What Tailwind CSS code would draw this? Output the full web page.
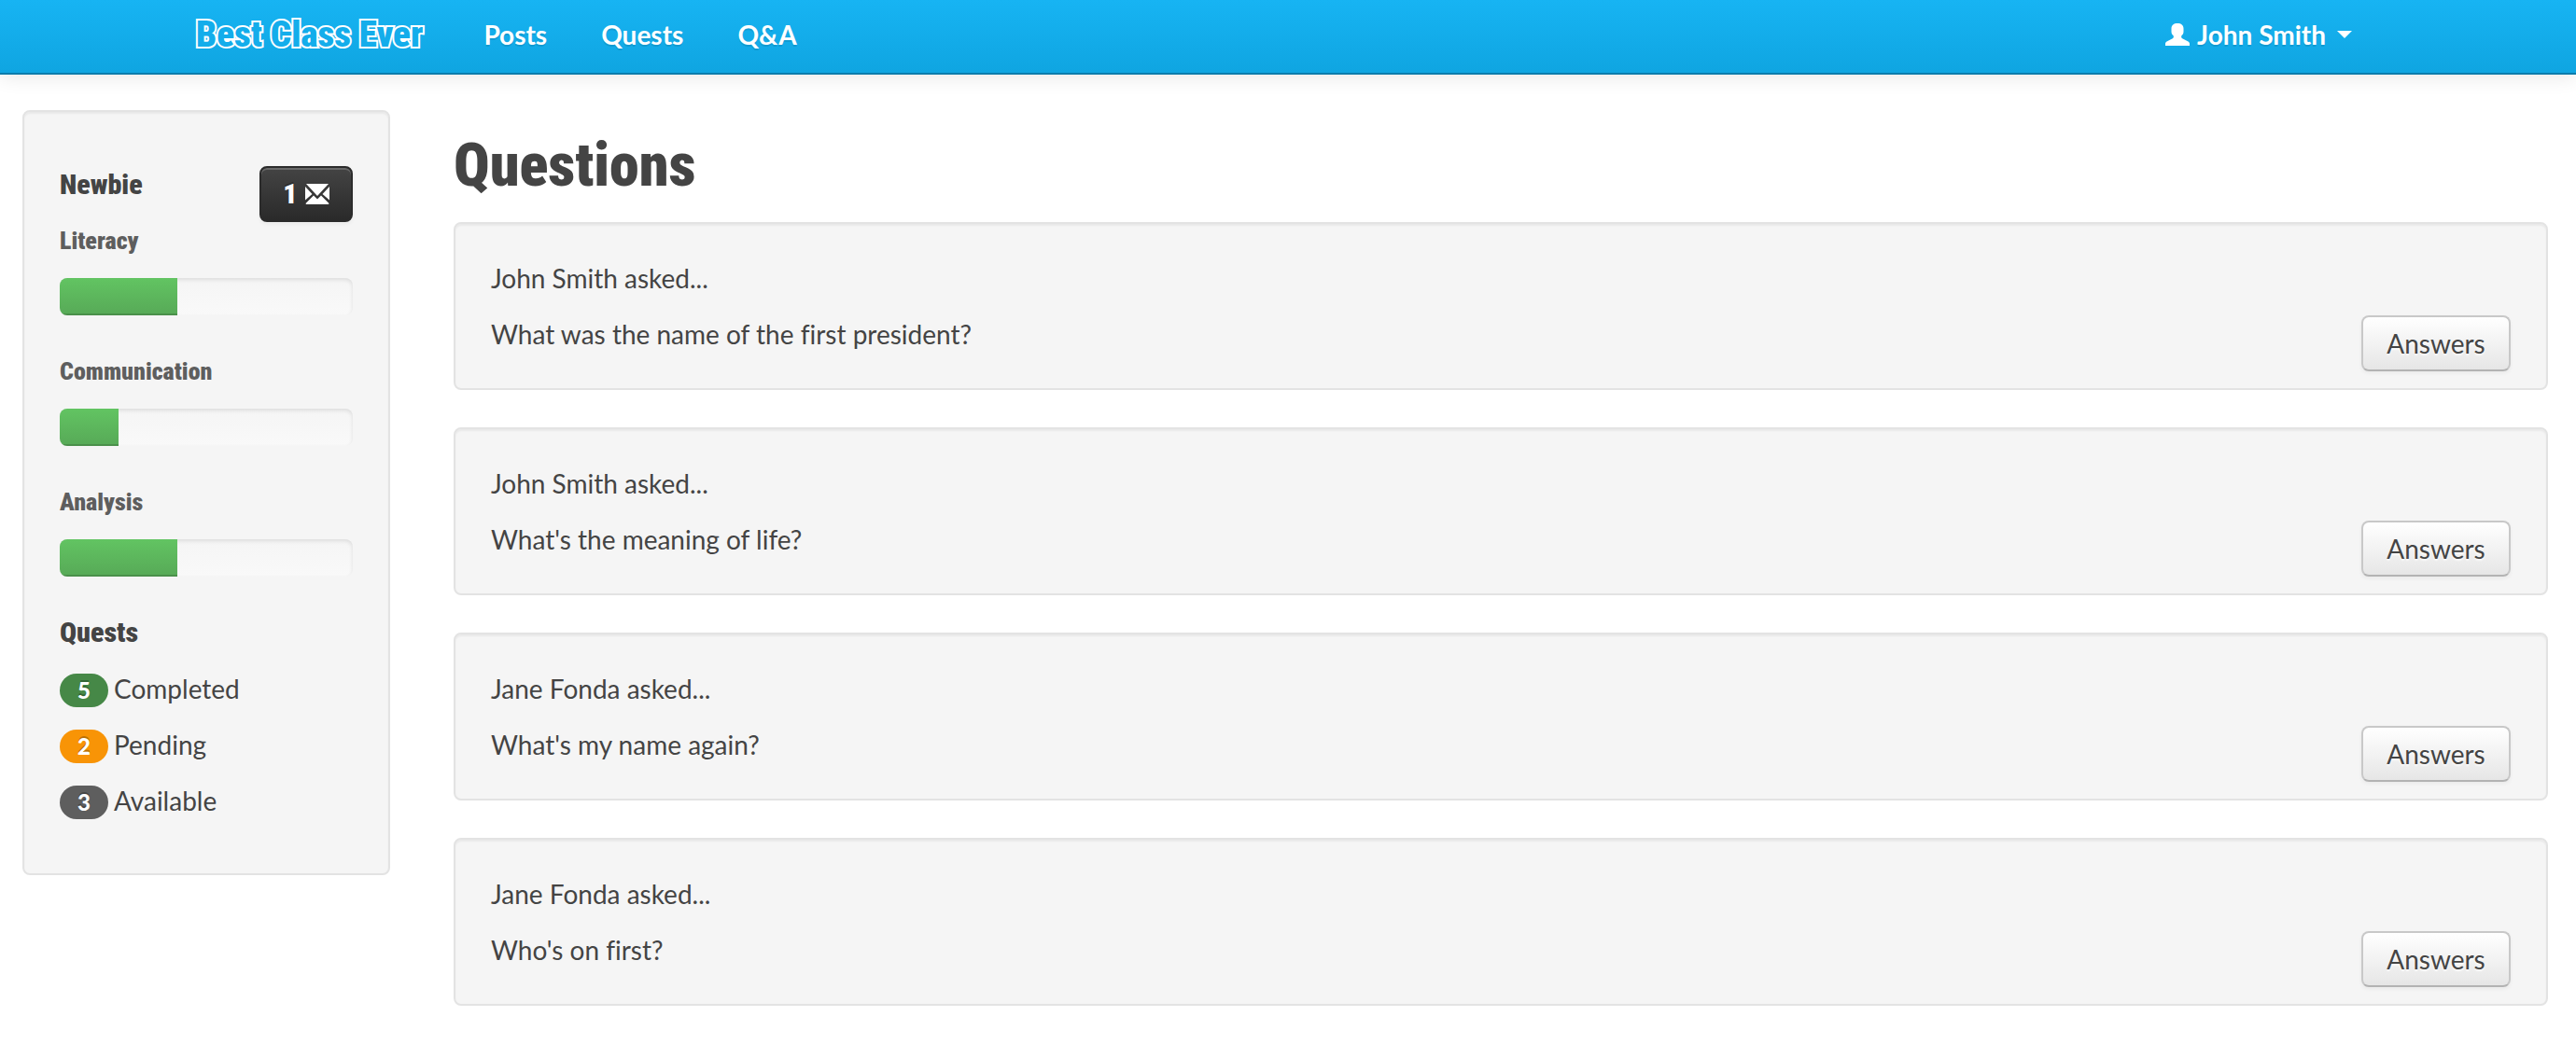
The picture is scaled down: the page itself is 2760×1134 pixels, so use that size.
<!DOCTYPE html>
<html lang="en">
<head>
  <meta charset="UTF-8" />
  <meta name="viewport" content="width=device-width, initial-scale=1" />
  <title>Questions - Best Class Ever</title>
  <script src="https://cdn.jsdelivr.net/npm/@tailwindcss/browser@4"></script>
  <style>
    body {
      font-family: Lato, sans-serif;
      font-variant-ligatures: none;
    }
    .display {
      font-family: 'Liberation Sans Narrow', 'Arial Narrow', 'Roboto Condensed', 'Liberation Sans', sans-serif;
      font-weight: 900;
    }
    /* outlined logo: the stroke goes under the fill so that only the outer edge shows */
    .brand {
      color: #13adeb;
      -webkit-text-stroke: 4px #fff;
      paint-order: stroke fill;
    }
  </style>
</head>
<body class="bg-white text-[28px] leading-10 text-[#444]">
  <!-- Navbar -->
  <nav class="h-20 border-b-2 border-[#0c7cab] bg-linear-to-b from-[#17b4f3] to-[#0fa5e1] shadow-[0_2px_20px_rgba(0,0,0,0.1)]">
    <div class="mx-auto flex h-full max-w-[2340px] items-center justify-between pb-1 text-white">
      <div class="flex items-center">
        <a href="#" class="display brand mr-9 text-[39px]">Best Class Ever</a>
        <a href="#" class="px-[29px] font-bold text-shadow-[0_2px_0_rgba(0,0,0,0.1)]">Posts</a>
        <a href="#" class="px-[29px] font-bold text-shadow-[0_2px_0_rgba(0,0,0,0.1)]">Quests</a>
        <a href="#" class="px-[29px] font-bold text-shadow-[0_2px_0_rgba(0,0,0,0.1)]">Q&amp;A</a>
      </div>
      <button type="button" class="flex items-center px-[30px] font-bold">
        <svg class="mr-2 h-6 w-[26px]" viewBox="0 0 26 24" fill="currentColor" aria-hidden="true">
          <path d="M13 0C9 0 6.500 2 6.500 5.500V9c0 2 .8 3 2 4 .8 1.500.3 2.800-1.200 3.600L2 19.300C.7 20 0 20.700 0 22v2h26v-2c0-1.300-.7-2-2-2.700l-5.300-2.700c-1.500-.8-2-2.100-1.200-3.600 1.200-1 2-2 2-4V5.500C19.500 2 17 0 13 0z" />
        </svg>
        <span class="text-shadow-[0_2px_0_rgba(0,0,0,0.1)]">John Smith</span>
        <span class="ml-3 border-x-8 border-t-8 border-x-transparent border-t-white"></span>
      </button>
    </div>
  </nav>

  <div class="flex items-start gap-[68px] pt-[38px] pr-[30px] pl-6">
    <!-- Sidebar -->
    <aside class="w-[394px] shrink-0 rounded-lg border-2 border-[#e3e3e3] bg-[#f5f5f5] px-[38px] pt-[58px] pb-[58px] shadow-[inset_0_2px_2px_rgba(0,0,0,0.05)]">
      <div class="flex h-[60px] items-start justify-between">
        <h4 class="display text-[30px]">Newbie</h4>
        <button type="button" class="display flex h-[60px] w-[100px] items-center justify-center gap-2 rounded-lg border-2 border-[#2b2b2b] bg-linear-to-b from-[#444] to-[#2a2a2a] text-[30px] text-white shadow-[inset_0_2px_0_rgba(255,255,255,0.2),0_2px_4px_rgba(0,0,0,0.05)] text-shadow-[0_-2px_0_rgba(0,0,0,0.25)]">
          1
          <svg class="h-[22px] w-[26px]" viewBox="0 0 26 22" fill="#fff" aria-label="messages">
            <path d="M1 0H25L13 13z" />
            <path d="M0 3L7.500 11 0 17.500z" />
            <path d="M26 3L18.500 11 26 17.500z" />
            <path d="M9 12.500L13 16.500 17 12.500 25.500 21 25 22H1L.5 21z" />
          </svg>
        </button>
      </div>

      <h5 class="display text-[26px] text-[#5e5e5e]">Literacy</h5>
      <div class="mt-5 mb-10 h-10 overflow-hidden rounded-lg bg-linear-to-b from-[#f5f5f5] to-[#f9f9f9] shadow-[inset_0_2px_4px_rgba(0,0,0,0.1)]" role="progressbar" aria-label="Literacy" aria-valuenow="40">
        <div class="h-full bg-linear-to-b from-[#62c462] to-[#57a957] shadow-[inset_0_-2px_0_rgba(0,0,0,0.15)]" style="width: 40%"></div>
      </div>

      <h5 class="display text-[26px] text-[#5e5e5e]">Communication</h5>
      <div class="mt-5 mb-10 h-10 overflow-hidden rounded-lg bg-linear-to-b from-[#f5f5f5] to-[#f9f9f9] shadow-[inset_0_2px_4px_rgba(0,0,0,0.1)]" role="progressbar" aria-label="Communication" aria-valuenow="20">
        <div class="h-full bg-linear-to-b from-[#62c462] to-[#57a957] shadow-[inset_0_-2px_0_rgba(0,0,0,0.15)]" style="width: 20%"></div>
      </div>

      <h5 class="display text-[26px] text-[#5e5e5e]">Analysis</h5>
      <div class="mt-5 mb-10 h-10 overflow-hidden rounded-lg bg-linear-to-b from-[#f5f5f5] to-[#f9f9f9] shadow-[inset_0_2px_4px_rgba(0,0,0,0.1)]" role="progressbar" aria-label="Analysis" aria-valuenow="40">
        <div class="h-full bg-linear-to-b from-[#62c462] to-[#57a957] shadow-[inset_0_-2px_0_rgba(0,0,0,0.15)]" style="width: 40%"></div>
      </div>

      <h4 class="display text-[30px]">Quests</h4>
      <ul class="mt-5 flex flex-col gap-5">
        <li class="flex h-10 items-end gap-1.5">
          <span class="h-9 w-[52px] rounded-full bg-[#468847] text-center text-2xl/9 font-black text-white text-shadow-[0_-2px_0_rgba(0,0,0,0.25)]">5</span>
          <span>Completed</span>
        </li>
        <li class="flex h-10 items-end gap-1.5">
          <span class="h-9 w-[52px] rounded-full bg-[#f89406] text-center text-2xl/9 font-black text-white text-shadow-[0_-2px_0_rgba(0,0,0,0.25)]">2</span>
          <span>Pending</span>
        </li>
        <li class="flex h-10 items-end gap-1.5">
          <span class="h-9 w-[52px] rounded-full bg-[#5e5e5e] text-center text-2xl/9 font-black text-white text-shadow-[0_-2px_0_rgba(0,0,0,0.25)]">3</span>
          <span>Available</span>
        </li>
      </ul>
    </aside>

    <!-- Questions -->
    <main class="min-w-0 flex-1 pb-14">
      <h1 class="display mt-5 mb-5 text-[64px]/[80px]">Questions</h1>
      <div class="flex flex-col gap-10">
        <div class="rounded-lg border-2 border-[#e3e3e3] bg-[#f5f5f5] p-[38px] shadow-[inset_0_2px_2px_rgba(0,0,0,0.05)]">
          <p class="mb-5">John Smith asked...</p>
          <div class="flex items-start justify-between">
            <p>What was the name of the first president?</p>
            <button type="button" class="-mb-5 h-[60px] w-40 rounded-lg border-2 border-[#c8c8c8] border-b-[#b3b3b3] bg-linear-to-b from-white to-[#e6e6e6] shadow-[0_2px_4px_rgba(0,0,0,0.05)] text-shadow-[0_2px_2px_rgba(255,255,255,0.75)]">Answers</button>
          </div>
        </div>
        <div class="rounded-lg border-2 border-[#e3e3e3] bg-[#f5f5f5] p-[38px] shadow-[inset_0_2px_2px_rgba(0,0,0,0.05)]">
          <p class="mb-5">John Smith asked...</p>
          <div class="flex items-start justify-between">
            <p>What's the meaning of life?</p>
            <button type="button" class="-mb-5 h-[60px] w-40 rounded-lg border-2 border-[#c8c8c8] border-b-[#b3b3b3] bg-linear-to-b from-white to-[#e6e6e6] shadow-[0_2px_4px_rgba(0,0,0,0.05)] text-shadow-[0_2px_2px_rgba(255,255,255,0.75)]">Answers</button>
          </div>
        </div>
        <div class="rounded-lg border-2 border-[#e3e3e3] bg-[#f5f5f5] p-[38px] shadow-[inset_0_2px_2px_rgba(0,0,0,0.05)]">
          <p class="mb-5">Jane Fonda asked...</p>
          <div class="flex items-start justify-between">
            <p>What's my name again?</p>
            <button type="button" class="-mb-5 h-[60px] w-40 rounded-lg border-2 border-[#c8c8c8] border-b-[#b3b3b3] bg-linear-to-b from-white to-[#e6e6e6] shadow-[0_2px_4px_rgba(0,0,0,0.05)] text-shadow-[0_2px_2px_rgba(255,255,255,0.75)]">Answers</button>
          </div>
        </div>
        <div class="rounded-lg border-2 border-[#e3e3e3] bg-[#f5f5f5] p-[38px] shadow-[inset_0_2px_2px_rgba(0,0,0,0.05)]">
          <p class="mb-5">Jane Fonda asked...</p>
          <div class="flex items-start justify-between">
            <p>Who's on first?</p>
            <button type="button" class="-mb-5 h-[60px] w-40 rounded-lg border-2 border-[#c8c8c8] border-b-[#b3b3b3] bg-linear-to-b from-white to-[#e6e6e6] shadow-[0_2px_4px_rgba(0,0,0,0.05)] text-shadow-[0_2px_2px_rgba(255,255,255,0.75)]">Answers</button>
          </div>
        </div>
      </div>
    </main>
  </div>
</body>
</html>
